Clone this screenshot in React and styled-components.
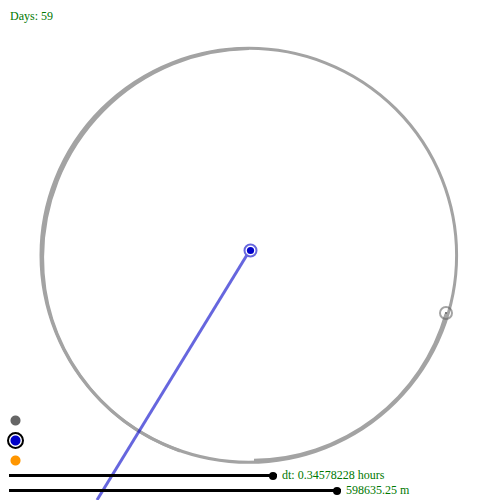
import React, { useState } from "react";
import styled, { createGlobalStyle } from "styled-components";

const GlobalStyle = createGlobalStyle`
  body {
    margin: 0;
    background: #fff;
    color: #007800;
    font: 12px/15px "Liberation Serif", serif;
    overflow: hidden;
  }
`;

const Stage = styled.main`
  display: grid;
  min-height: 100vh;
  > * {
    grid-area: 1 / 1;
    min-width: 0;
  }
`;

const Orbits = styled.svg`
  display: block;
  width: 100%;
  height: 100%;
`;

const Hud = styled.div`
  display: flex;
  flex-direction: column;
  justify-content: space-between;
  padding: 9px 9px 2px;
`;

const Days = styled.div`
  padding-left: 1px;
`;

const Controls = styled.div`
  display: flex;
  flex-direction: column;
`;

const BodyPicker = styled.div`
  display: flex;
  flex-direction: column;
  align-items: flex-start;
  gap: 3px;
  margin: 0 0 -1px -2px;
`;

const BodyOption = styled.input.attrs({ type: "radio", name: "body" })`
  appearance: none;
  box-sizing: border-box;
  width: 17px;
  height: 17px;
  margin: 0;
  border: 2px solid transparent;
  border-radius: 50%;
  background: radial-gradient(circle, ${(p) => p.$color} 4.5px, transparent 5.5px) border-box;
  &:checked {
    border-color: #000;
  }
`;

const SliderRow = styled.label`
  display: flex;
  align-items: center;
  gap: 5px;
  height: 15px;
  white-space: nowrap;
`;

const Slider = styled.input.attrs({ type: "range" })`
  appearance: none;
  height: 9px;
  margin: 0;
  border-radius: 2px;
  background: linear-gradient(#000, #000) center / 100% 3px no-repeat;
  &::-webkit-slider-thumb {
    appearance: none;
    width: 8px;
    height: 8px;
    border-radius: 50%;
    background: #000;
  }
`;

const bodies = [
  { name: "Moon", color: "#666" },
  { name: "Earth", color: "#0000c8" },
  { name: "Sun", color: "#ff9600" },
];

const sliders = [
  { name: "Time step", reach: 55.6, text: "dt: 0.34578228 hours" },
  { name: "Scale", reach: 68.9, text: "598635.25 m" },
];

export default function App() {
  const [focus, setFocus] = useState("Earth");
  return (
    <Stage>
      <GlobalStyle />
      <Orbits viewBox="0 0 500 500" preserveAspectRatio="xMidYMid slice" role="img" aria-label="Moon orbit around Earth">
        <g fill="none" stroke="#a3a3a3" strokeWidth="3">
          <ellipse cx="248.8" cy="255.3" rx="207.8" ry="207" />
          <path d="M249 48.5A209 209.5 0 0 0 42.6 257A206.5 205 0 0 0 180 451" />
          <path d="M254 460.3A202 202 0 0 0 446 314" />
        </g>
        <path d="M250 250L97 500" stroke="#0000c8" strokeOpacity=".6" strokeWidth="3" />
        <circle cx="250.5" cy="250.5" r="6" fill="#fff" stroke="#6666de" strokeWidth="2" />
        <circle cx="250.5" cy="250.5" r="3.6" fill="#0000c8" />
        <circle cx="446" cy="313" r="6" fill="none" stroke="#666" strokeOpacity=".6" strokeWidth="2" />
        <circle cx="446" cy="313" r="1" fill="#555" />
      </Orbits>
      <Hud>
        <Days>Days: 59</Days>
        <Controls>
          <BodyPicker role="radiogroup" aria-label="Centred body">
            {bodies.map((b) => (
              <BodyOption
                key={b.name}
                $color={b.color}
                aria-label={b.name}
                checked={focus === b.name}
                onChange={() => setFocus(b.name)}
              />
            ))}
          </BodyPicker>
          {sliders.map((s) => (
            <SliderRow key={s.name}>
              <Slider aria-label={s.name} defaultValue={100} style={{ width: `${s.reach}%` }} />
              {s.text}
            </SliderRow>
          ))}
        </Controls>
      </Hud>
    </Stage>
  );
}
